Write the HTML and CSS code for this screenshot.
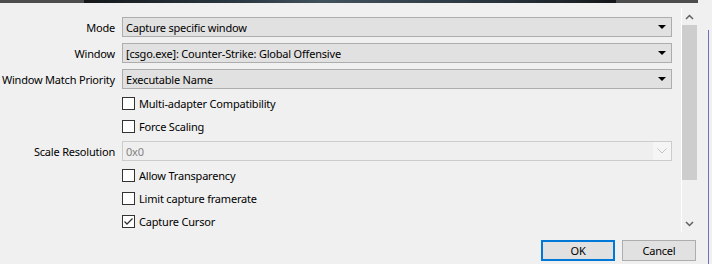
FILE: index.html
```html
<!DOCTYPE html>
<html lang="en">
<head>
    <meta charset="UTF-8">
    <title>Window Capture Properties</title>
    <link rel="stylesheet" href="styles.css">
</head>
<body>

<div class="dialog">
    <div class="preview-strip">
        <div class="strip-side"></div>
        <div class="strip-image"></div>
        <div class="strip-side strip-right"></div>
    </div>

    <div class="main">
        <div class="props">
            <label class="prop-label">Mode</label>
            <div class="combo">
                <span>Capture specific window</span>
                <span class="combo-arrow"></span>
            </div>

            <label class="prop-label">Window</label>
            <div class="combo">
                <span>[csgo.exe]: Counter-Strike: Global Offensive</span>
                <span class="combo-arrow"></span>
            </div>

            <label class="prop-label">Window Match Priority</label>
            <div class="combo">
                <span>Executable Name</span>
                <span class="combo-arrow"></span>
            </div>

            <span></span>
            <div class="check"><span class="box"></span>Multi-adapter Compatibility</div>

            <span></span>
            <div class="check"><span class="box"></span>Force Scaling</div>

            <label class="prop-label">Scale Resolution</label>
            <div class="combo disabled">
                <span class="field-text">0x0</span>
                <span class="chevron-zone">
                    <svg width="10" height="6" viewBox="0 0 10 6"><polyline points="0.5,0.5 5,5 9.5,0.5" fill="none" stroke="#c4c4c4" stroke-width="1"/></svg>
                </span>
            </div>

            <span></span>
            <div class="check"><span class="box"></span>Allow Transparency</div>

            <span></span>
            <div class="check"><span class="box"></span>Limit capture framerate</div>

            <span></span>
            <div class="check">
                <span class="box">
                    <svg width="11" height="11" viewBox="0 0 11 11"><polyline points="1.5,5.5 4,8 9.5,2.5" fill="none" stroke="#333" stroke-width="1.3"/></svg>
                </span>Capture Cursor
            </div>
        </div>

        <div class="scrollbar">
            <svg class="scroll-arrow" width="9" height="6" viewBox="0 0 9 6"><polyline points="1,5 4.5,1.5 8,5" fill="none" stroke="#606060" stroke-width="1.5"/></svg>
            <div class="scroll-thumb"></div>
            <div class="scroll-space"></div>
            <svg class="scroll-arrow" width="9" height="6" viewBox="0 0 9 6"><polyline points="1,1 4.5,4.5 8,1" fill="none" stroke="#606060" stroke-width="1.5"/></svg>
        </div>
    </div>

    <div class="buttons">
        <button class="btn btn-default">OK</button>
        <button class="btn">Cancel</button>
    </div>
</div>
<div class="edge"></div>

</body>
</html>
```

FILE: styles.css
```css
body {
    background-color: #f0f0f0;
    font-family: "Noto Sans", sans-serif;
    font-size: 11px;
    letter-spacing: -0.2px;
    color: #000;
    margin: 0;
    width: 712px;
    height: 264px;
    overflow: hidden;
    display: flex;
}

.dialog {
    width: 709px;
    display: flex;
    flex-direction: column;
}

.preview-strip {
    display: flex;
    height: 3px;
}

.strip-side {
    width: 84px;
    background-color: #4d4d4d;
}

.strip-image {
    width: 532px;
    background: linear-gradient(90deg, #15181a 0%, #2c3a44 30%, #42525c 45%, #2e3b45 70%, #1f262c 90%, #141618 100%);
}

.strip-right {
    width: 82px;
}

.main {
    display: flex;
    align-items: flex-start;
    height: 237px;
}

.props {
    width: 672px;
    padding-top: 14px;
    display: grid;
    grid-template-columns: 115px 550px;
    grid-template-rows: 20px 20px 20px 17px 17px 20px 17px 17px 17px;
    column-gap: 7px;
    row-gap: 6px;
    align-items: center;
}

.prop-label {
    text-align: right;
    white-space: nowrap;
}

.combo {
    height: 20px;
    box-sizing: border-box;
    border: 1px solid #adadad;
    background-color: #e1e1e1;
    display: flex;
    align-items: center;
    justify-content: space-between;
    padding-left: 3px;
    padding-right: 5px;
}

.combo-arrow {
    width: 0;
    height: 0;
    border-left: 4px solid transparent;
    border-right: 4px solid transparent;
    border-top: 4px solid #000;
}

.combo.disabled {
    background-color: #efefef;
    border-color: #cccccc;
    padding-right: 0;
}

.field-text {
    color: #838383;
}

.chevron-zone {
    width: 18px;
    height: 18px;
    background-color: #f5f5f5;
    display: flex;
    align-items: center;
    justify-content: center;
}

.check {
    display: flex;
    align-items: center;
    gap: 4px;
    white-space: nowrap;
}

.box {
    width: 13px;
    height: 13px;
    box-sizing: border-box;
    border: 1px solid #333;
    background-color: #fff;
    display: flex;
    align-items: center;
    justify-content: center;
}

.scrollbar {
    margin-left: 9px;
    margin-top: 5px;
    height: 224px;
    width: 16px;
    box-sizing: border-box;
    border-left: 1px solid #fff;
    display: flex;
    flex-direction: column;
    align-items: center;
}

.scroll-arrow {
    margin: 6px 0 5px;
}

.scroll-thumb {
    width: 15px;
    height: 155px;
    background-color: #cdcdcd;
}

.scroll-space {
    flex: 1;
}

.buttons {
    display: flex;
    justify-content: flex-end;
    gap: 7px;
    padding-right: 12px;
}

.btn {
    width: 74px;
    height: 21px;
    box-sizing: border-box;
    border: 1px solid #adadad;
    background-color: #e1e1e1;
    font-family: "Noto Sans", sans-serif;
    font-size: 11px;
    letter-spacing: -0.2px;
    color: #000;
    padding: 0;
}

.btn-default {
    border: 2px solid #0078d7;
}

.edge {
    width: 3px;
    margin-top: 30px;
    border-left: 1px solid #6e6ec4;
}
```
